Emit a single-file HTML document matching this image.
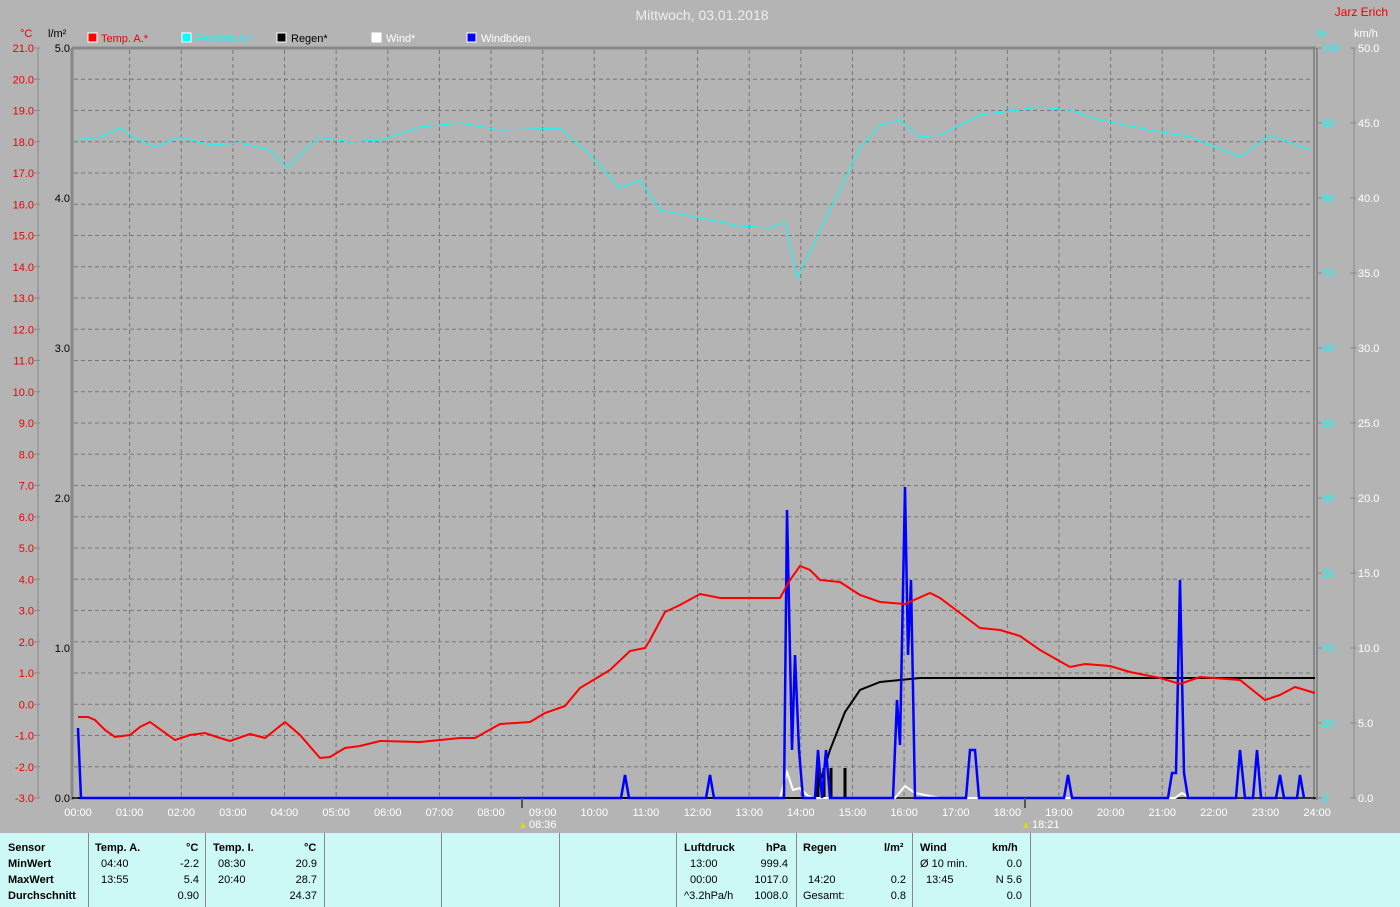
<!DOCTYPE html>
<html><head><meta charset="utf-8"><style>
body{margin:0;width:1400px;height:907px;background:#b4b4b4;overflow:hidden;font-family:"Liberation Sans",sans-serif}
svg{position:absolute;left:0;top:0}
#tbl{position:absolute;left:0;top:833px;width:1400px;height:74px;background:#ccf8f6;font-size:11px;color:#000}
.c{position:absolute;top:0;height:74px;border-right:1px solid #888}
.t{position:absolute;white-space:nowrap}
.b{font-weight:bold}
</style></head><body>
<svg width="1400" height="833" font-family="Liberation Sans, sans-serif" font-size="11">
<text x="702" y="20" fill="#eee" font-size="14" text-anchor="middle">Mittwoch, 03.01.2018</text>
<text x="1388" y="16" fill="#e00" font-size="12" text-anchor="end">Jarz Erich</text>
<text x="20" y="37" fill="#e00">°C</text><text x="48" y="37" fill="#000">l/m²</text>
<text x="1316" y="37" fill="#0ff">%</text><text x="1354" y="37" fill="#fff">km/h</text>
<rect x="88" y="33" width="9" height="9" fill="#f00" stroke="#fff"/><text x="101" y="42" fill="#e00">Temp. A.*</text>
<rect x="182" y="33" width="9" height="9" fill="#0ff" stroke="#fff"/><text x="196" y="42" fill="#0ff">Feuchte A.*</text>
<rect x="277" y="33" width="9" height="9" fill="#000" stroke="#fff"/><text x="291" y="42" fill="#000">Regen*</text>
<rect x="372" y="33" width="9" height="9" fill="#fff" stroke="#fff"/><text x="386" y="42" fill="#fff">Wind*</text>
<rect x="467" y="33" width="9" height="9" fill="#00f" stroke="#fff"/><text x="481" y="42" fill="#fff">Windböen</text>
<g id="grid" stroke="#777" stroke-dasharray="4,3" stroke-width="1">
</g>
<line x1="72" y1="48" x2="1316" y2="48" stroke="#888" stroke-width="3"/>
<line x1="72" y1="48" x2="72" y2="800" stroke="#888" stroke-width="3"/>
<line x1="1314" y1="48" x2="1314" y2="800" stroke="#888" stroke-width="2"/>
<line x1="1317" y1="48" x2="1317" y2="800" stroke="#888" stroke-width="2"/>
<line x1="38" y1="48" x2="38" y2="798" stroke="#888"/>
<line x1="1354" y1="48" x2="1354" y2="798" stroke="#888"/>
<line x1="72" y1="798" x2="1316" y2="798" stroke="#000" stroke-width="1.5"/>
<g id="labels"></g>
<polyline fill="none" stroke="#0ff" stroke-width="1" points="78,140 100,137 120,128 135,138 155,147 180,137 210,145 240,143 270,150 287,168 305,150 320,137 350,142 380,140 420,127 460,123 500,130 560,128 590,155 620,188 640,180 660,210 700,218 740,226 770,228 785,222 797,278 830,210 860,148 880,125 900,120 920,137 940,135 980,115 1040,107 1070,110 1100,120 1150,130 1190,137 1240,157 1270,135 1310,150"/>
<polyline fill="none" stroke="#000" stroke-width="2" points="78,798 815,798 830,750 845,712 860,690 880,682 900,680 920,678 1315,678"/>
<g stroke="#000" stroke-width="3"><line x1="818" y1="768" x2="818" y2="798"/><line x1="824" y1="768" x2="824" y2="798"/><line x1="831" y1="768" x2="831" y2="798"/><line x1="845" y1="768" x2="845" y2="798"/></g>
<polyline fill="none" stroke="#fff" stroke-width="2" points="780,798 787,772 793,790 800,788 808,796 815,798 895,798 905,786 915,793 940,798 1175,798 1182,793 1190,798"/>
<polyline fill="none" stroke="#00f" stroke-width="2.5" points="78,728 81,798 621,798 625,775 629,798 706,798 710,775 714,798 784,798 787,510 792,750 795,655 799,750 803,798 815,798 818,750 822,798 826,750 830,798 893,798 897,700 900,745 905,487 908,655 911,580 915,798 966,798 970,750 975,750 979,798 1064,798 1068,775 1072,798 1168,798 1172,773 1176,773 1180,580 1184,773 1188,798 1236,798 1240,750 1245,798 1253,798 1257,750 1261,798 1276,798 1280,775 1284,798 1297,798 1300,775 1304,798"/>
<polyline fill="none" stroke="#f00" stroke-width="2" points="78,717 88,717 95,720 105,730 115,737 130,735 140,727 150,722 175,740 190,735 205,733 220,738 230,741 250,734 265,738 285,722 300,735 320,758 330,757 345,748 360,746 380,741 420,742 460,738 475,738 500,724 530,722 545,713 565,706 580,688 600,676 610,670 630,651 645,648 650,640 665,612 680,605 700,594 720,598 780,598 790,580 800,566 810,570 820,580 840,582 860,595 880,602 905,604 930,593 940,598 960,613 980,628 1000,630 1020,636 1040,650 1070,667 1085,664 1110,666 1130,672 1160,678 1180,684 1200,677 1240,680 1265,700 1280,695 1295,687 1315,693"/>
<line x1="522" y1="798" x2="522" y2="808" stroke="#555" stroke-width="2"/>
<line x1="1025" y1="798" x2="1025" y2="808" stroke="#555" stroke-width="2"/>
<text x="518" y="828" fill="#dd0" font-size="10">▲</text><text x="529" y="828" fill="#fff">08:36</text>
<text x="1021" y="828" fill="#dd0" font-size="10">▲</text><text x="1032" y="828" fill="#fff">18:21</text>
</svg>
<script>
var g=document.getElementById('grid'),L=document.getElementById('labels'),ns='http://www.w3.org/2000/svg';
function el(p,t,a,txt){var e=document.createElementNS(ns,t);for(var k in a)e.setAttribute(k,a[k]);if(txt!=null)e.textContent=txt;p.appendChild(e);return e;}
for(var i=1;i<24;i++){var y=48+i*31.25;el(g,'line',{x1:74,y1:y,x2:1313,y2:y});}
for(var h=1;h<24;h++){var x=78+h*51.63;el(g,'line',{x1:x,y1:50,x2:x,y2:797});}
for(var i=0;i<=24;i++){var y=48+i*31.25;var T=(21-i).toFixed(1);el(L,'text',{x:34,y:y+4,fill:'#e00','text-anchor':'end'},T);el(L,'line',{x1:34,y1:y,x2:40,y2:y,stroke:'#888'});}
for(var i=0;i<=5;i++){var y=798-i*150;el(L,'text',{x:70,y:y+4,fill:'#000','text-anchor':'end'},i.toFixed(1));}
for(var i=0;i<=10;i++){var y=798-i*75;el(L,'text',{x:1322,y:y+4,fill:'#0ff'},String(i*10));el(L,'line',{x1:1317,y1:y,x2:1322,y2:y,stroke:'#888'});el(L,'text',{x:1358,y:y+4,fill:'#fff'},(i*5).toFixed(1));el(L,'line',{x1:1350,y1:y,x2:1356,y2:y,stroke:'#888'});}
for(var h=0;h<=24;h++){var x=78+h*51.63;el(L,'text',{x:x,y:816,fill:'#fff','text-anchor':'middle'},(h<10?'0':'')+h+':00');}
</script>
<div id="tbl">
<div class="c" style="left:0;width:88px"></div><div class="c" style="left:88px;width:117px"></div><div class="c" style="left:205px;width:119px"></div><div class="c" style="left:324px;width:117px"></div><div class="c" style="left:441px;width:118px"></div><div class="c" style="left:559px;width:117px"></div><div class="c" style="left:676px;width:120px"></div><div class="c" style="left:796px;width:116px"></div><div class="c" style="left:912px;width:118px"></div>
<div class="t b" style="left:8px;top:9px">Sensor</div><div class="t b" style="left:8px;top:25px">MinWert</div><div class="t b" style="left:8px;top:41px">MaxWert</div><div class="t b" style="left:8px;top:57px">Durchschnitt</div>
<div class="t b" style="left:95px;top:9px">Temp. A.</div><div class="t b" style="left:186px;top:9px">°C</div>
<div class="t" style="left:101px;top:25px">04:40</div><div class="t" style="right:1201px;top:25px">-2.2</div>
<div class="t" style="left:101px;top:41px">13:55</div><div class="t" style="right:1201px;top:41px">5.4</div><div class="t" style="right:1201px;top:57px">0.90</div>
<div class="t b" style="left:213px;top:9px">Temp. I.</div><div class="t b" style="left:304px;top:9px">°C</div>
<div class="t" style="left:218px;top:25px">08:30</div><div class="t" style="right:1083px;top:25px">20.9</div>
<div class="t" style="left:218px;top:41px">20:40</div><div class="t" style="right:1083px;top:41px">28.7</div><div class="t" style="right:1083px;top:57px">24.37</div>
<div class="t b" style="left:684px;top:9px">Luftdruck</div><div class="t b" style="left:766px;top:9px">hPa</div>
<div class="t" style="left:690px;top:25px">13:00</div><div class="t" style="right:612px;top:25px">999.4</div>
<div class="t" style="left:690px;top:41px">00:00</div><div class="t" style="right:612px;top:41px">1017.0</div>
<div class="t" style="left:684px;top:57px">^3.2hPa/h</div><div class="t" style="right:612px;top:57px">1008.0</div>
<div class="t b" style="left:803px;top:9px">Regen</div><div class="t b" style="left:884px;top:9px">l/m²</div>
<div class="t" style="left:808px;top:41px">14:20</div><div class="t" style="right:494px;top:41px">0.2</div>
<div class="t" style="left:803px;top:57px">Gesamt:</div><div class="t" style="right:494px;top:57px">0.8</div>
<div class="t b" style="left:920px;top:9px">Wind</div><div class="t b" style="left:992px;top:9px">km/h</div>
<div class="t" style="left:920px;top:25px">Ø 10 min.</div><div class="t" style="right:378px;top:25px">0.0</div>
<div class="t" style="left:926px;top:41px">13:45</div><div class="t" style="right:378px;top:41px">N 5.6</div>
<div class="t" style="right:378px;top:57px">0.0</div>
</div>
</body></html>
